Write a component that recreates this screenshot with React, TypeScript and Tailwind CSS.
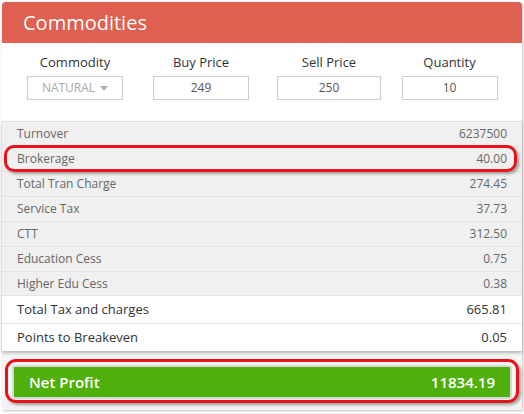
import React from "react";

const grayRows: [string, string][] = [
  ["Turnover", "6237500"],
  ["Brokerage", "40.00"],
  ["Total Tran Charge", "274.45"],
  ["Service Tax", "37.73"],
  ["CTT", "312.50"],
  ["Education Cess", "0.75"],
  ["Higher Edu Cess", "0.38"],
];

export default function App() {
  return (
    <div className="w-[524px] h-[414px] bg-white relative font-['Open_Sans',sans-serif] overflow-hidden">
      <div className="ml-[2px] mt-[2px] w-[520px] h-[408px] flex flex-col bg-[#f4f4f4] rounded-t-[4px] shadow-[1px_1px_3px_rgba(0,0,0,0.25)]">
        {/* Header */}
        <div className="h-[41px] bg-[#e06151] rounded-t-[4px] flex items-center pl-[21px] text-white text-[20px] [text-shadow:0_0_1px_rgba(0,0,0,0.15)]">
          Commodities
        </div>
        {/* Inputs */}
        <div className="h-[78px] bg-white flex pl-[10px] pt-[10px]">
          {[
            { label: "Commodity", value: "NATURAL", w: "w-[126px]", iw: "w-[96px]", select: true },
            { label: "Buy Price", value: "249", w: "w-[126px]", iw: "w-[96px]" },
            { label: "Sell Price", value: "250", w: "w-[130px]", iw: "w-[104px]" },
            { label: "Quantity", value: "10", w: "w-[111px]", iw: "w-[96px]" },
          ].map((c) => (
            <div key={c.label} className={`${c.w} flex flex-col items-center`}>
              <div className="text-[13px] leading-[18px] text-[#333]">{c.label}</div>
              <div className={`mt-[5px] ${c.iw} h-[24px] border border-[#cccccc] bg-white flex items-center justify-center text-[12px]`}>
                {c.select ? (
                  <span className="text-[#aaa] flex items-center gap-[5px]">
                    NATURAL
                    <svg width="8" height="5" viewBox="0 0 8 5">
                      <path d="M0 0 L8 0 L4 4.5 Z" fill="#aaa" />
                    </svg>
                  </span>
                ) : (
                  <span className="text-[#555]">{c.value}</span>
                )}
              </div>
            </div>
          ))}
        </div>
        {/* Table */}
        <div className="border-t border-[#dddddd] shadow-[0_2px_3px_rgba(0,0,0,0.25)] relative z-10">
          {grayRows.map(([k, v], i) => (
            <div
              key={k}
              className={`${i === 6 ? "h-[24px]" : "h-[25px]"} bg-[#f0f0f0] border-b border-[#e2e2e2] flex items-center justify-between pl-[15px] pr-[15px] text-[12px] text-[#666]`}
            >
              <span>{k}</span>
              <span>{v}</span>
            </div>
          ))}
          <div className="h-[28px] bg-white border-b border-[#e2e2e2] flex items-center justify-between pl-[15px] pr-[15px] text-[13px] text-[#333]">
            <span>Total Tax and charges</span>
            <span>665.81</span>
          </div>
          <div className="h-[27px] bg-white flex items-center justify-between pl-[15px] pr-[15px] text-[13px] text-[#333]">
            <span>Points to Breakeven</span>
            <span>0.05</span>
          </div>
        </div>
        {/* Net profit */}
        <div className="flex-1 pt-[14px] px-[10px]">
          <div className="h-[34px] rounded-[3px] border-2 border-[#d8d8d8] bg-[#4faf0b] flex items-center justify-between pl-[15px] pr-[15px] text-white text-[15px] font-semibold">
            <span>Net Profit</span>
            <span>11834.19</span>
          </div>
        </div>
      </div>

      {/* Annotations */}
      <div className="absolute left-[4px] top-[145px] w-[513px] h-[27px] rounded-[10px] border-[3px] border-[#e5141a] shadow-[2px_2px_3px_rgba(0,0,0,0.35)] z-20" />
      <div className="absolute left-[5px] top-[359px] w-[514px] h-[44px] rounded-[11px] border-[3px] border-[#e5141a] shadow-[2px_2px_3px_rgba(0,0,0,0.35)] z-20" />
    </div>
  );
}
